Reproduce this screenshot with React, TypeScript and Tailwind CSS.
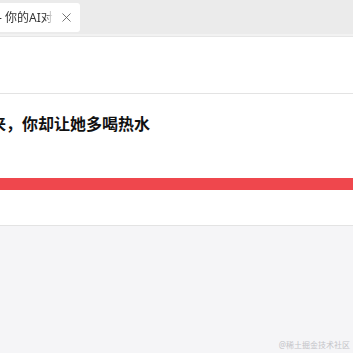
import { X } from "lucide-react";

export default function App() {
  return (
    <div
      className="w-[353px] h-[353px] overflow-hidden flex flex-col bg-white"
      style={{ fontFamily: '"Noto Sans", "Noto Sans CJK SC", sans-serif' }}
    >
      {/* tab strip */}
      <div className="h-[34px] shrink-0 bg-[#ebebeb] flex items-start pt-[3px]">
        <div className="w-[80px] h-[29px] bg-white rounded-r-[3px] flex items-center overflow-hidden">
          <span className="ml-[-2px] w-[55px] shrink-0 overflow-hidden whitespace-nowrap text-[12px] text-[#333] [mask-image:linear-gradient(to_right,black_85%,transparent)]">
            - 你的AI对话
          </span>
          <X size={15} strokeWidth={1.3} className="ml-[6px] shrink-0 text-[#555]" />
        </div>
      </div>
      <div className="h-[3px] shrink-0 bg-[#f2f2f2] border-b border-[#e6e6e6]" />

      {/* toolbar area */}
      <div className="h-[57px] shrink-0 border-b border-[#e3e3e3]" />

      {/* title */}
      <div className="h-[132px] shrink-0 flex flex-col">
        <div className="mt-[20px] ml-[-10px] whitespace-nowrap text-[16px] font-bold text-[#111] leading-[20px]">
          来，你却让她多喝热水
        </div>
        <div className="mt-[44px] h-[12px] bg-[#ef474d]" />
        <div className="flex-1 border-b border-[#e3e3e3]" />
      </div>

      {/* footer area */}
      <div className="flex-1 bg-[#f5f5f7] flex items-end justify-end pr-[3px] pb-[3px]">
        <span className="text-[8px] leading-[10px] text-[#c4c4c8]">@稀土掘金技术社区</span>
      </div>
    </div>
  );
}
